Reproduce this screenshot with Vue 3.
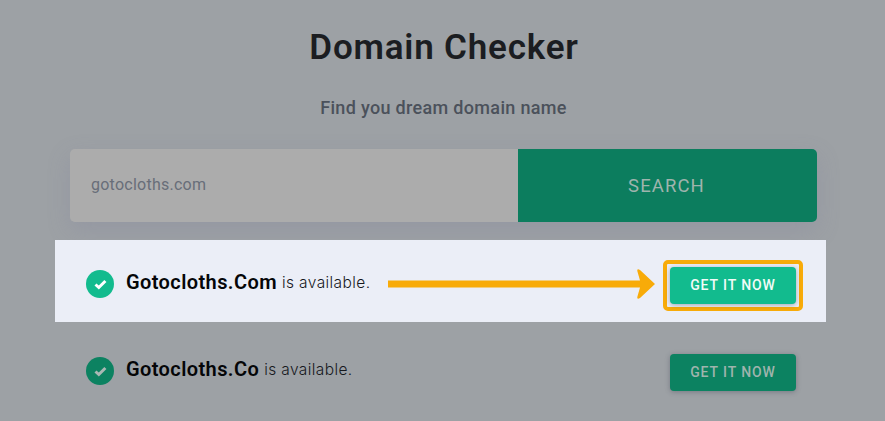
<script setup>
import { ref } from "vue"

const domain = ref("gotocloths.com")

const results = [
  { id: 1, name: "Gotocloths.Com", active: true },
  { id: 2, name: "Gotocloths.Co", active: false }
]
</script>

<template>
  <main class="checker">
    <h1>Domain Checker</h1>
    <p class="subtitle">Find you dream domain name</p>

    <div class="search">
      <input v-model="domain" type="text" />
      <button class="search-btn">SEARCH</button>
    </div>

    <div
      v-for="result in results"
      :key="result.id"
      class="result"
      :class="{ active: result.active }"
    >
      <svg class="check" viewBox="0 0 28 28">
        <circle cx="14" cy="14" r="14" />
        <path d="M9.5 14.5L12.8 17.5L19.4 11" />
      </svg>
      <span class="name">{{ result.name }}</span>
      <span class="status">is available.</span>
      <!-- arrow pointing to the button -->
      <svg v-if="result.active" class="arrow" viewBox="0 0 268 32">
        <path d="M0 12.5H252L249.3 3Q249 0 252 2L267 16L252 30Q249 32 249.3 29L252 19.5H0Z" />
      </svg>
      <div class="frame">
        <button class="get-btn">GET IT NOW</button>
      </div>
    </div>
  </main>
</template>

<style>
body {
  margin: 0;
  background: #9da1a5;
}
</style>

<style scoped>
.checker {
  height: 421px;
  overflow: hidden;
  font-family: Roboto, "Liberation Sans", sans-serif;
  background: #9da1a5;
}

h1 {
  margin: 0;
  padding: 28px 0 0 3px;
  line-height: 40px;
  font-size: 35px;
  font-weight: 600;
  letter-spacing: 0.8px;
  text-align: center;
  color: #1b1d21;
}

.subtitle {
  margin: 28px 0 0;
  padding-left: 2px;
  line-height: 24px;
  font-size: 18px;
  font-weight: 500;
  letter-spacing: 0.32px;
  text-align: center;
  color: #4b515b;
}

.search {
  display: flex;
  width: 747px;
  height: 73px;
  margin: 29px 0 0 70px;
  border-radius: 5px;
  overflow: hidden;
  box-shadow: 0 8px 22px rgba(125, 125, 155, 0.25);
}

input {
  box-sizing: border-box;
  width: 448px;
  padding: 0 21px 3px;
  border: none;
  outline: none;
  background: #acacac;
  color: #686e79;
  font: 400 16px Roboto, sans-serif;
  letter-spacing: 0.25px;
}

button {
  padding: 0;
  border: none;
  font-family: Roboto, sans-serif;
}

.search-btn {
  flex: 1;
  padding-right: 2px;
  background: #0c7d5e;
  color: #9fb4ad;
  font-size: 18.5px;
  letter-spacing: 1.1px;
}

.result {
  display: flex;
  align-items: center;
  box-sizing: border-box;
  width: 771px;
  height: 82px;
  margin: 5px 0 0 55px;
  padding: 8px 23px 0 31px;
}

.result.active {
  margin-top: 18px;
  background: #ebeef7;
}

.check {
  width: 28px;
  height: 28px;
  margin: 0 12px 2px 0;
}

.check circle {
  fill: #0c8261;
}

.check path {
  fill: none;
  stroke: #a9b8b4;
  stroke-width: 3;
}

.active .check circle {
  fill: #12bb8e;
}

.active .check path {
  stroke: #fff;
}

.name {
  font-size: 20px;
  font-weight: 600;
  letter-spacing: 0.4px;
  color: #050608;
  line-height: 24px;
  padding-bottom: 7px;
}

.status {
  margin-left: 5px;
  font-family: Inter, sans-serif;
  font-size: 15.5px;
  font-weight: 300;
  letter-spacing: 0.4px;
  line-height: 24px;
  padding-bottom: 4px;
  color: #17191e;
}

.arrow {
  width: 268px;
  height: 32px;
  margin: 0 0 2px auto;
  fill: #f8ab09;
}

.frame {
  box-sizing: border-box;
  width: 140px;
  height: 51px;
  margin-left: auto;
  padding: 3px;
  border: 4px solid transparent;
  border-radius: 5px;
}

.arrow + .frame {
  margin-left: 7px;
}

.active .frame {
  border-color: #f8ab09;
}

.get-btn {
  display: block;
  width: 126px;
  height: 37px;
  border-radius: 4px;
  background: #0c8261;
  color: #9fb4ad;
  font-size: 14px;
  font-weight: 500;
  letter-spacing: 0.9px;
  box-shadow: 0 1px 5px rgba(70, 75, 90, 0.45);
}

.active .get-btn {
  background: #12bb8e;
  color: #f2fbf8;
}
</style>
